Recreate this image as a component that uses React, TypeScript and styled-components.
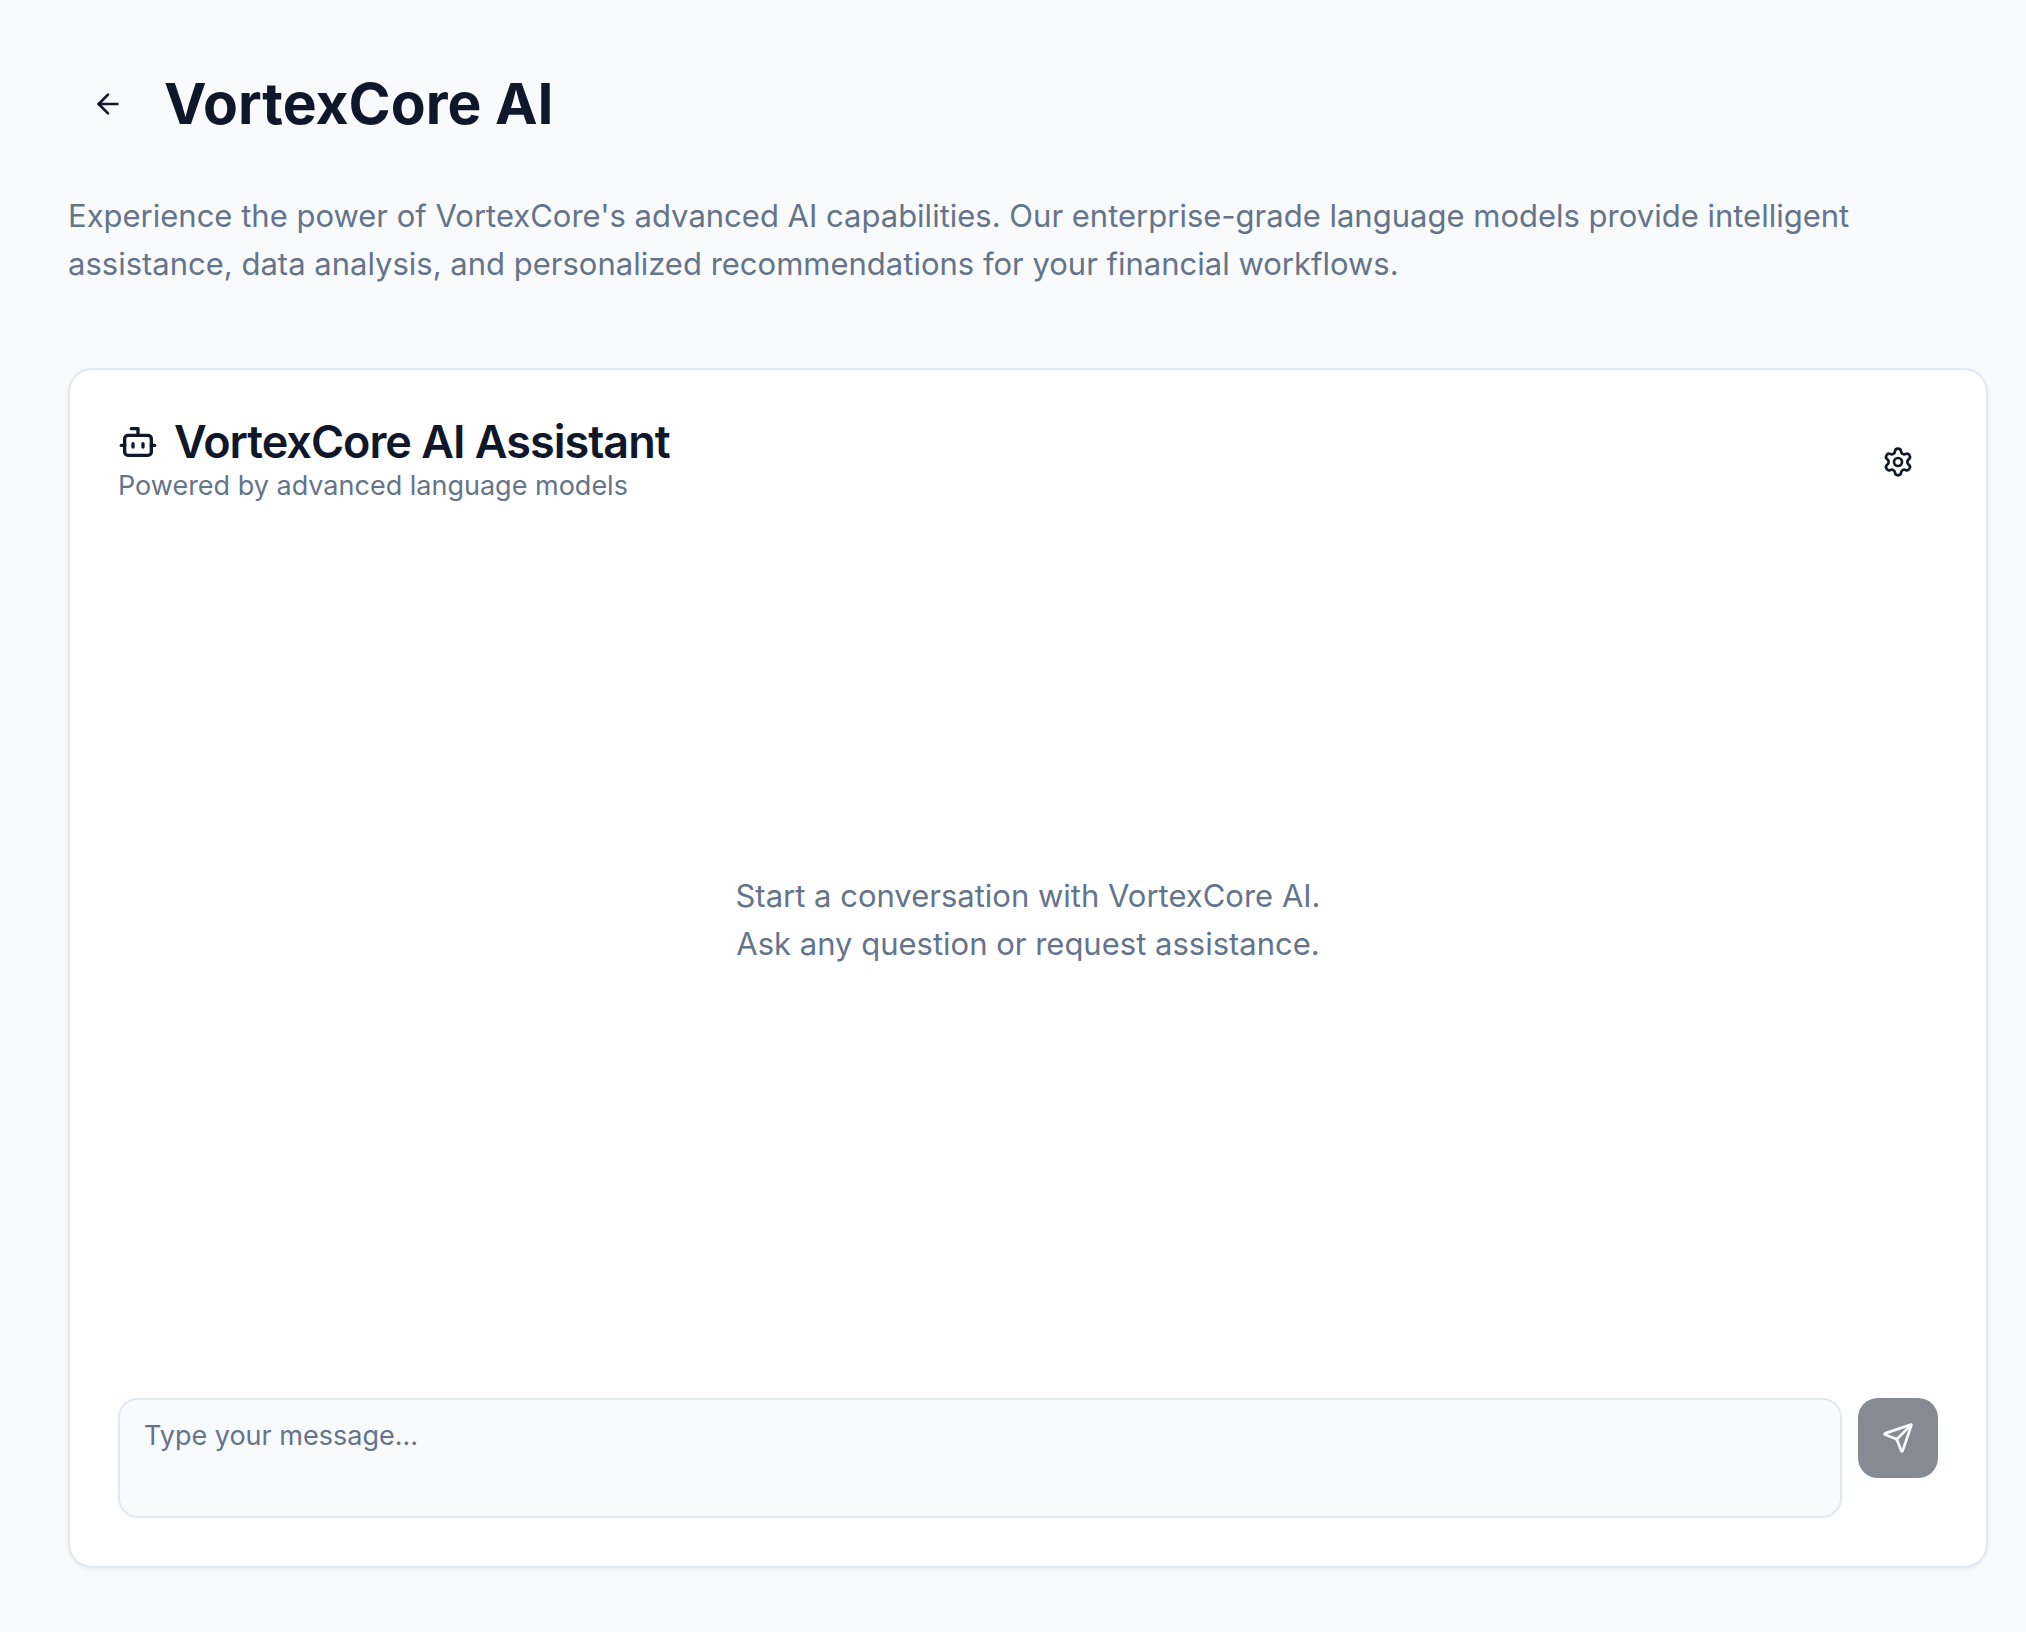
import React, { useState } from "react";
import styled, { createGlobalStyle } from "styled-components";
import { ArrowLeft, Bot, Send, Settings } from "lucide-react";

const GlobalStyle = createGlobalStyle`
  *, *::before, *::after { box-sizing: border-box; }
  body {
    margin: 0;
    background: #f8fafc;
    color: #0f172a;
    font-family: Inter, "Noto Sans", sans-serif;
    font-size: 31px;
    line-height: 48px;
    -webkit-font-smoothing: antialiased;
  }
  h1, h2, p { margin: 0; }
`;

const Page = styled.main`
  display: flex;
  flex-direction: column;
  min-height: 100vh;
  padding: 64px 38px 64px 68px;
`;

const PageHeader = styled.header`
  display: flex;
  align-items: center;
  gap: 16px;
  margin-bottom: 48px;
`;

const IconButton = styled.button<{ $solid?: boolean }>`
  display: inline-flex;
  align-items: center;
  justify-content: center;
  flex: none;
  width: 80px;
  height: 80px;
  padding: 0;
  border: 0;
  border-radius: 20px;
  background: ${(p) => (p.$solid ? "#0f172a" : "transparent")};
  color: ${(p) => (p.$solid ? "#f8fafc" : "#0f172a")};
  cursor: pointer;

  &:disabled {
    opacity: 0.5;
    cursor: default;
  }
`;

const PageTitle = styled.h1`
  font-size: 57px;
  line-height: 72px;
  font-weight: 700;
`;

const Intro = styled.p`
  max-width: 1792px;
  margin-bottom: 80px;
  color: #64748b;
`;

const Card = styled.section`
  display: flex;
  flex: 1;
  flex-direction: column;
  padding: 48px;
  border: 2px solid #e2e8f0;
  border-radius: 24px;
  background: #ffffff;
  box-shadow: 0 2px 4px rgba(0, 0, 0, 0.05);
`;

const CardHeader = styled.header`
  display: flex;
  align-items: center;
  justify-content: space-between;
`;

const CardTitle = styled.h2`
  display: flex;
  align-items: center;
  gap: 16px;
  font-size: 45px;
  line-height: 48px;
  font-weight: 600;
  letter-spacing: -1px;
`;

const CardDescription = styled.p`
  color: #64748b;
  font-size: 27px;
  line-height: 40px;
`;

const Messages = styled.div`
  display: flex;
  flex: 1;
  flex-direction: column;
  align-items: center;
  justify-content: center;
  color: #64748b;
  text-align: center;
`;

const Composer = styled.form`
  display: flex;
  align-items: flex-start;
  gap: 16px;
  margin-top: 64px;
`;

const MessageInput = styled.textarea`
  display: block;
  flex: 1;
  min-width: 0;
  height: 120px;
  padding: 16px 24px;
  border: 2px solid #e2e8f0;
  border-radius: 20px;
  background: #f8fafc;
  color: #0f172a;
  font-family: inherit;
  font-size: 27px;
  line-height: 40px;
  resize: none;

  &::placeholder {
    color: #64748b;
    opacity: 1;
  }
`;

export default function App() {
  const [message, setMessage] = useState("");

  return (
    <Page>
      <GlobalStyle />
      <PageHeader>
        <IconButton type="button" aria-label="Back">
          <ArrowLeft size={32} />
        </IconButton>
        <PageTitle>VortexCore AI</PageTitle>
      </PageHeader>
      <Intro>
        Experience the power of VortexCore's advanced AI capabilities. Our enterprise-grade language
        models provide intelligent assistance, data analysis, and personalized recommendations for
        your financial workflows.
      </Intro>
      <Card>
        <CardHeader>
          <div>
            <CardTitle>
              <Bot size={40} />
              VortexCore AI Assistant
            </CardTitle>
            <CardDescription>Powered by advanced language models</CardDescription>
          </div>
          <IconButton type="button" aria-label="Settings">
            <Settings size={32} />
          </IconButton>
        </CardHeader>
        <Messages>
          <p>Start a conversation with VortexCore AI.</p>
          <p>Ask any question or request assistance.</p>
        </Messages>
        <Composer onSubmit={(e) => e.preventDefault()}>
          <MessageInput
            aria-label="Message"
            placeholder="Type your message..."
            value={message}
            onChange={(e) => setMessage(e.target.value)}
          />
          <IconButton $solid type="submit" aria-label="Send" disabled={!message.trim()}>
            <Send size={32} />
          </IconButton>
        </Composer>
      </Card>
    </Page>
  );
}
